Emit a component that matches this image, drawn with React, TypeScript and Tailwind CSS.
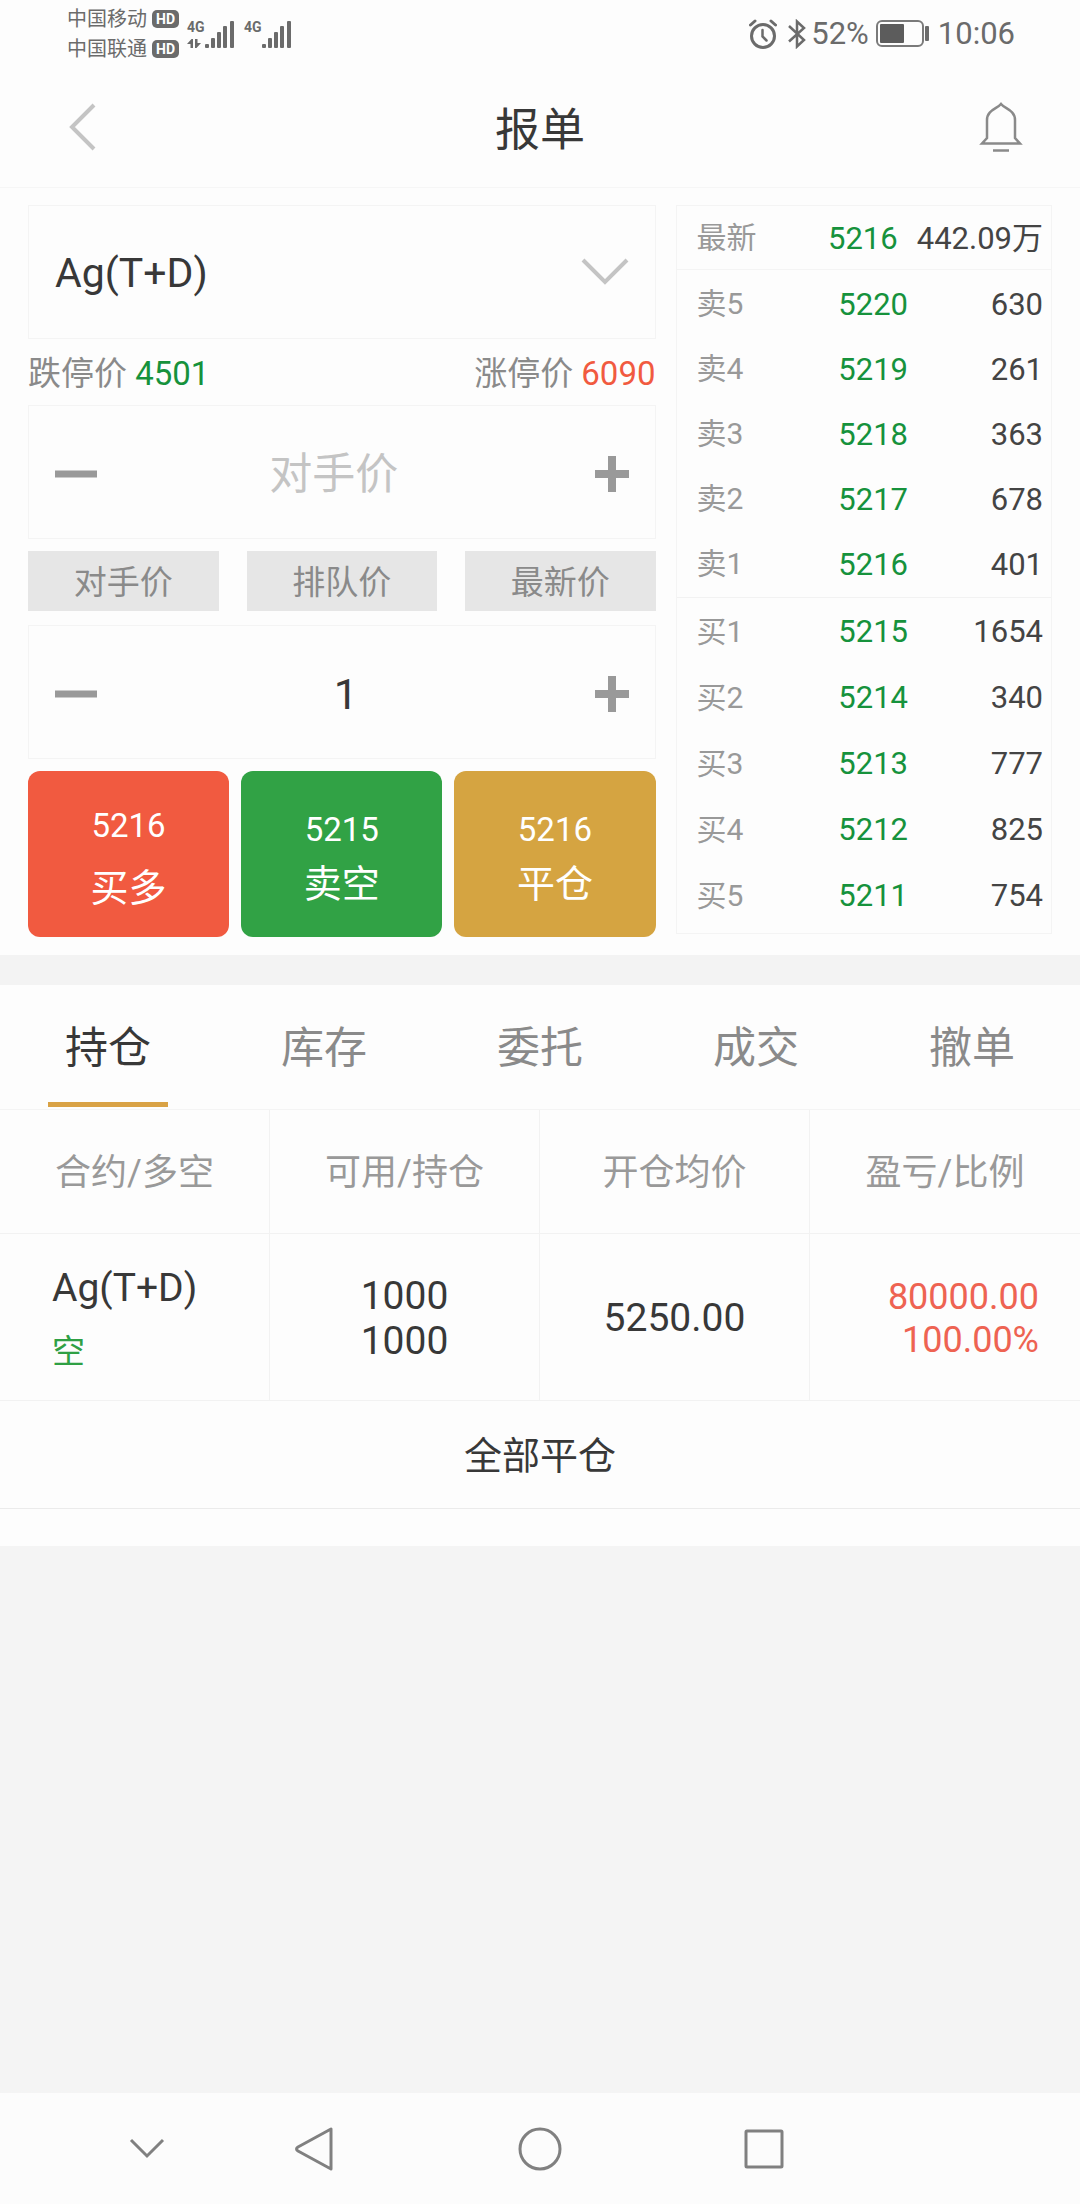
import { useState } from "react";

const SELLS = [
  { label: "卖5", price: 5220, amount: 630 },
  { label: "卖4", price: 5219, amount: 261 },
  { label: "卖3", price: 5218, amount: 363 },
  { label: "卖2", price: 5217, amount: 678 },
  { label: "卖1", price: 5216, amount: 401 },
];

const BUYS = [
  { label: "买1", price: 5215, amount: 1654 },
  { label: "买2", price: 5214, amount: 340 },
  { label: "买3", price: 5213, amount: 777 },
  { label: "买4", price: 5212, amount: 825 },
  { label: "买5", price: 5211, amount: 754 },
];

const TABS = ["持仓", "库存", "委托", "成交", "撤单"];
const PRICE_TYPES = ["对手价", "排队价", "最新价"];
const COLUMNS = ["合约/多空", "可用/持仓", "开仓均价", "盈亏/比例"];

function Carrier({ name }: { name: string }) {
  return (
    <div className="flex h-[30px] items-center gap-[5px]">
      <span className="text-[20px] leading-[30px]">{name}</span>
      <span className="flex h-[18px] w-[27px] items-center justify-center rounded-[5px] bg-[#6b6b6b] text-[14px] font-bold leading-[18px] text-white">
        HD
      </span>
    </div>
  );
}

function Signal({ data }: { data?: boolean }) {
  return (
    <div className="flex items-end">
      <div className="flex h-[30px] w-[17px] flex-col justify-between">
        <span className="text-[14px] font-bold leading-[16px]">4G</span>
        {data && (
          <svg width="14" height="10" viewBox="0 0 14 10" fill="#6b6b6b">
            <path d="M0 5 L4.500 0 H6 V9 H3.500 V5 Z M8 0 H10.500 V4 H14 L9.500 9 H8 Z" />
          </svg>
        )}
      </div>
      <svg width="32" height="30" viewBox="0 0 32 30" fill="#6b6b6b">
        <rect x="1" y="25" width="4" height="4" rx="1" />
        <rect x="7" y="19" width="4" height="10" rx="1" />
        <rect x="13" y="13" width="4" height="16" rx="1" />
        <rect x="19" y="7" width="4" height="22" rx="1" />
        <rect x="26" y="2" width="4" height="27" rx="1" />
      </svg>
    </div>
  );
}

function StatusBar() {
  return (
    <div className="flex h-[68px] items-center justify-between pl-[67px] pr-[65px] text-[#6b6b6b]">
      <div className="flex items-center">
        <div>
          <Carrier name="中国移动" />
          <Carrier name="中国联通" />
        </div>
        <div className="ml-2 flex gap-2">
          <Signal data />
          <Signal />
        </div>
      </div>
      <div className="flex items-center text-[31px] leading-[40px]">
        {/* Alarm */}
        <svg width="28" height="30" viewBox="0 0 28 30" fill="none" stroke="#6b6b6b" strokeWidth="3" strokeLinecap="round">
          <circle cx="14" cy="17" r="11.500" />
          <path d="M13.500 11 V17.500 L17.500 21.500" strokeWidth="2.500" />
          <path d="M1.500 6 L6 2 M26.500 6 L22 2" />
        </svg>
        {/* Bluetooth */}
        <svg className="ml-[10px]" width="20" height="30" viewBox="0 0 20 30" fill="none" stroke="#6b6b6b" strokeWidth="2.500">
          <path d="M2 7 L17 21 L10 27.500 V2.500 L17 9 L2 22.500" />
        </svg>
        <span className="ml-1">52%</span>
        {/* Battery */}
        <svg className="ml-[7px]" width="54" height="28" viewBox="0 0 54 28">
          <rect x="1" y="1" width="46" height="25" rx="5" fill="none" stroke="#7a7a7a" strokeWidth="2" />
          <rect x="4" y="4" width="24" height="19" rx="1" fill="#5c5c5c" />
          <rect x="49" y="6" width="4" height="15" rx="1" fill="#6b6b6b" />
        </svg>
        <span className="ml-2">10:06</span>
      </div>
    </div>
  );
}

function Header() {
  return (
    <header className="grid h-[120px] grid-cols-3 items-center border-b border-[#f6f6f6] px-[57px] pb-[2px]">
      <button type="button" aria-label="返回" className="justify-self-start pl-[11px]">
        <svg width="28" height="48" viewBox="0 0 28 48" fill="none" stroke="#c4c4c4" strokeWidth="4">
          <path d="M26 2 L4 24 L26 46" />
        </svg>
      </button>
      <h1 className="pt-2 text-center text-[45px] leading-[60px]">报单</h1>
      <button type="button" aria-label="消息" className="justify-self-end">
        <svg width="44" height="50" viewBox="0 0 44 50" fill="none" stroke="#8a8a8a" strokeWidth="2.500">
          <path d="M22 2 C18 7 8 8 8 18 V36 L3 41.500 H41 L36 36 V18 C36 8 26 7 22 2 Z" />
          <path d="M14 48.500 H30" />
        </svg>
      </button>
    </header>
  );
}

type StepperProps = {
  label: string;
  value: string;
  placeholder?: string;
  onChange: (value: string) => void;
  onStep: (delta: number) => void;
};

function Stepper({ label, value, placeholder, onChange, onStep }: StepperProps) {
  return (
    <div className="flex h-[134px] items-center border border-[#f4f4f4] px-[26px] pt-[3px]">
      <button type="button" aria-label={`${label}减`} onClick={() => onStep(-1)}>
        <svg width="42" height="36" viewBox="0 0 42 36" stroke="#999999" strokeWidth="7">
          <path d="M0 18 H42" />
        </svg>
      </button>
      <input
        aria-label={label}
        value={value}
        placeholder={placeholder}
        onChange={(e) => onChange(e.target.value)}
        className="h-[64px] w-full min-w-0 flex-1 bg-transparent pt-[2px] text-center text-[43px] outline-none placeholder:text-[#c4c4c4] placeholder-shown:pr-6"
      />
      <button type="button" aria-label={`${label}加`} onClick={() => onStep(1)}>
        <svg width="34" height="36" viewBox="0 0 34 36" stroke="#999999" strokeWidth="8">
          <path d="M0 18 H34 M17 0 V36" />
        </svg>
      </button>
    </div>
  );
}

function BookRow({ label, price, amount }: { label: string; price: number; amount: number | string }) {
  return (
    <>
      <th scope="row" className="text-left text-[30px] font-normal text-[#999999]">
        {label}
      </th>
      <td className="flex-1 pt-[3px] text-right text-[#16923c]">{price}</td>
      <td className="min-w-[135px] pl-[19px] pt-[3px] text-right text-[#444444]">{amount}</td>
    </>
  );
}

function OrderBook() {
  return (
    <table className="block min-w-0 self-start border border-[#f4f4f4] pb-[5px] text-[31px]">
      <tbody className="block border-b border-[#f4f4f4] pl-5 pr-2">
        <tr className="flex h-[63px] items-center">
          <BookRow label="最新" price={5216} amount="442.09万" />
        </tr>
      </tbody>
      <tbody className="block border-b border-[#f2f2f2] py-px pl-5 pr-2">
        {SELLS.map((row) => (
          <tr key={row.label} className="flex h-[65px] items-center">
            <BookRow {...row} />
          </tr>
        ))}
      </tbody>
      <tbody className="block pl-5 pr-2">
        {BUYS.map((row) => (
          <tr key={row.label} className="flex h-[66px] items-center">
            <BookRow {...row} />
          </tr>
        ))}
      </tbody>
    </table>
  );
}

function OrderForm() {
  const [price, setPrice] = useState("");
  const [count, setCount] = useState("1");

  return (
    <div className="min-w-0">
      <div className="relative">
        <select
          aria-label="合约"
          className="block h-[134px] w-full appearance-none border border-[#f4f4f4] bg-transparent px-[26px] pt-1 text-[41px] outline-none"
        >
          <option>Ag(T+D)</option>
        </select>
        <svg
          className="pointer-events-none absolute right-[27px] top-[53px]"
          width="48"
          height="28"
          viewBox="0 0 48 28"
          fill="none"
          stroke="#c4c4c4"
          strokeWidth="4"
        >
          <path d="M2 2 L24 24 L46 2" />
        </svg>
      </div>

      <div className="flex h-[66px] items-center justify-between pt-1 text-[33px] leading-[44px] text-[#8a8a8a]">
        <p>
          跌停价 <span className="text-[#16923c]">4501</span>
        </p>
        <p>
          涨停价 <span className="text-[#f15a40]">6090</span>
        </p>
      </div>

      <Stepper
        label="价格"
        value={price}
        placeholder="对手价"
        onChange={setPrice}
        onStep={(d) => setPrice(String((Number(price) || 5216) + d))}
      />

      <div className="my-3 grid grid-cols-3 gap-7 pb-[2px]">
        {PRICE_TYPES.map((t) => (
          <button key={t} type="button" className="h-[60px] bg-[#e6e6e6] pt-1 text-[33px] leading-[44px] text-[#8a8a8a]">
            {t}
          </button>
        ))}
      </div>

      <Stepper
        label="数量"
        value={count}
        onChange={setCount}
        onStep={(d) => setCount(String(Math.max(1, Number(count) + d)))}
      />

      <div className="mt-3 grid grid-cols-3 gap-3 text-white">
        <button type="button" className="flex h-[166px] flex-col items-center justify-center gap-2 rounded-xl bg-[#f15a40] pt-2">
          <span className="text-[33px] leading-[52px]">5216</span>
          <span className="text-[38px] leading-[56px]">买多</span>
        </button>
        <button type="button" className="flex h-[166px] flex-col items-center justify-center rounded-xl bg-[#31a245] pt-2">
          <span className="text-[33px] leading-[52px]">5215</span>
          <span className="text-[38px] leading-[56px]">卖空</span>
        </button>
        <button type="button" className="flex h-[166px] flex-col items-center justify-center rounded-xl bg-[#d5a441] pt-2">
          <span className="text-[33px] leading-[52px]">5216</span>
          <span className="text-[38px] leading-[56px]">平仓</span>
        </button>
      </div>
    </div>
  );
}

function Positions() {
  const [active, setActive] = useState("持仓");

  return (
    <section className="pb-[37px]">
      <nav className="grid grid-cols-5 border-b border-[#f4f4f4]">
        {TABS.map((tab) => (
          <button
            key={tab}
            type="button"
            onClick={() => setActive(tab)}
            className={
              tab === active
                ? "relative h-[124px] pt-[3px] text-[43px] text-[#383838]"
                : "relative h-[124px] pt-[3px] text-[43px] text-[#8a8a8a]"
            }
          >
            {tab}
            {tab === active && (
              <span className="absolute bottom-[2px] left-1/2 h-[5px] w-[120px] -translate-x-1/2 bg-[#d9a245]" />
            )}
          </button>
        ))}
      </nav>

      <table className="w-full table-fixed border-separate border-spacing-0">
        <thead>
          <tr>
            {COLUMNS.map((c) => (
              <th
                key={c}
                className="h-[124px] border-b border-r border-[#f2f2f2] p-0 pt-[3px] text-[36px] font-normal text-[#999999] last:border-r-0"
              >
                {c}
              </th>
            ))}
          </tr>
        </thead>
        <tbody className="text-[39px]">
          <tr>
            <td className="h-[167px] border-b border-r border-[#f2f2f2] pl-[52px] pt-[6px] leading-[63px]">
              <div>Ag(T+D)</div>
              <div className="text-[33px] text-[#2fa044]">空</div>
            </td>
            <td className="border-b border-r border-[#f2f2f2] pt-[3px] text-center leading-[45px]">
              <div>1000</div>
              <div>1000</div>
            </td>
            <td className="border-b border-r border-[#f2f2f2] pt-[3px] text-center">5250.00</td>
            <td className="border-b border-[#f2f2f2] pr-[41px] pt-[3px] text-right text-[36px] leading-[43px] text-[#ee6352]">
              <div>80000.00</div>
              <div>100.00%</div>
            </td>
          </tr>
        </tbody>
      </table>

      <button type="button" className="block h-[108px] w-full border-b border-[#ebebeb] pt-1 text-[38px]">
        全部平仓
      </button>
    </section>
  );
}

function NavBar() {
  return (
    <nav className="flex h-[111px] items-center bg-[#fcfcfc] pl-[119px]">
      <button type="button" aria-label="收起" className="flex w-14 justify-center">
        <svg width="36" height="22" viewBox="0 0 36 22" fill="none" stroke="#808080" strokeWidth="3">
          <path d="M2 2 L18 18 L34 2" />
        </svg>
      </button>
      <button type="button" aria-label="后退" className="ml-[111px] flex w-14 justify-center">
        <svg width="38" height="44" viewBox="0 0 38 44" fill="none" stroke="#808080" strokeWidth="3" strokeLinejoin="round">
          <path d="M36 2 V42 L3 24 Q0 22 3 20 Z" />
        </svg>
      </button>
      <button type="button" aria-label="主页" className="ml-[170px] flex w-14 justify-center">
        <svg width="44" height="44" viewBox="0 0 44 44" fill="none" stroke="#808080" strokeWidth="3">
          <circle cx="22" cy="22" r="20" />
        </svg>
      </button>
      <button type="button" aria-label="最近任务" className="ml-[168px] flex w-14 justify-center">
        <svg width="40" height="40" viewBox="0 0 40 40" fill="none" stroke="#808080" strokeWidth="3">
          <rect x="2" y="2" width="36" height="36" rx="1" />
        </svg>
      </button>
    </nav>
  );
}

export default function App() {
  return (
    <div className="flex min-h-screen flex-col bg-[#f4f4f4] font-[Roboto,'Noto_Sans_CJK_SC',sans-serif] text-[#383838]">
      <div className="bg-[#fdfdfd]">
        <StatusBar />
        <Header />
        <main>
          <div className="grid grid-cols-[5fr_3fr] gap-5 border-b-[30px] border-[#f3f3f3] px-7 pb-[18px] pt-[17px]">
            <OrderForm />
            <OrderBook />
          </div>
          <Positions />
        </main>
      </div>
      <div className="flex-1" />
      <NavBar />
    </div>
  );
}
